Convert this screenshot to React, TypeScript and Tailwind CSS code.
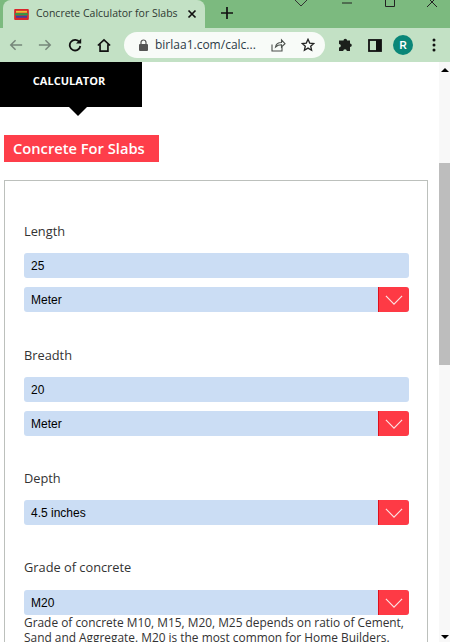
import React from "react";

const OPEN = "font-['Open_Sans',sans-serif]";
const ARIAL = "font-['Liberation_Sans',Arial,sans-serif]";

function Favicon() {
  return (
    <svg width="15" height="11" viewBox="0 0 16 12" className="shrink-0">
      <rect width="16" height="12" rx="1" fill="#d8262c" />
      <rect x="2" y="2" width="12" height="2" fill="#e8c33a" />
      <rect x="1" y="4.5" width="14" height="2.5" fill="#2f9a49" />
      <rect x="2" y="7.5" width="12" height="2" fill="#3b3fa8" />
    </svg>
  );
}

function BrowserChrome() {
  return (
    <div className="h-[62px] shrink-0 flex flex-col">
      {/* tab strip */}
      <div className="h-[28px] bg-[#7cba7f] flex relative overflow-hidden">
        <div className="ml-[3px] w-[202px] h-[28px] bg-[#c3e1c5] rounded-t-lg flex items-center pl-[11px] pr-[6px]">
          <Favicon />
          <span className={`${OPEN} ml-[7px] text-[10.500px] text-[#2f3a33] w-[146px] whitespace-nowrap`}>
            Concrete Calculator for Slabs
          </span>
          <svg width="10" height="10" viewBox="0 0 10 10" className="ml-[5px] shrink-0">
            <path d="M1.5 1.5l7 7M8.5 1.5l-7 7" stroke="#111" strokeWidth="1.7" />
          </svg>
        </div>
        <svg width="12" height="12" viewBox="0 0 12 12" className="ml-[16px] mt-[7px]">
          <path d="M6 0v12M0 6h12" stroke="#111" strokeWidth="1.7" />
        </svg>
        <div className="ml-auto flex">
          <svg width="14" height="8" viewBox="0 0 14 8" className="mr-[34px] mt-[-1px]">
            <path d="M1 1l6 6 6-6" fill="none" stroke="#333" strokeWidth="1" />
          </svg>
          <svg width="10" height="8" viewBox="0 0 10 8" className="mr-[33px]">
            <path d="M0 3h10" stroke="#222" strokeWidth="1" />
          </svg>
          <svg width="10" height="8" viewBox="0 0 10 8" className="mr-[32px]">
            <path d="M.5 -3h9v9.500h-9z" fill="none" stroke="#222" strokeWidth="1" />
          </svg>
          <svg width="10" height="8" viewBox="0 0 10 8" className="mr-[13px]">
            <path d="M0 -3l10 10M10 -3L0 7" stroke="#222" strokeWidth="1" />
          </svg>
        </div>
      </div>
      {/* toolbar */}
      <div className="h-[34px] bg-[#c3e1c5] flex items-center relative">
        <svg width="14" height="14" viewBox="0 0 16 14" className="ml-[9px]">
          <path d="M15 7H2M7.500 1.500L2 7l5.500 5.500" fill="none" stroke="#76867a" strokeWidth="1.700" />
        </svg>
        <svg width="14" height="14" viewBox="0 0 16 14" className="ml-[15px]">
          <path d="M1 7h13M8.500 1.500L14 7l-5.500 5.500" fill="none" stroke="#76867a" strokeWidth="1.700" />
        </svg>
        <svg width="14" height="14" viewBox="0 0 14 14" className="ml-[16px]">
          <path d="M11.500 4.300A5.300 5.300 0 1 0 12.300 8" fill="none" stroke="#111" strokeWidth="1.800" />
          <path d="M8 5.500h5.200V.500z" fill="#111" />
        </svg>
        <svg width="14" height="15" viewBox="0 0 16 15" className="ml-[15px]">
          <path d="M1 7.500L8 1l7 6.500M3.500 6v8h9V6" fill="none" stroke="#111" strokeWidth="1.900" />
        </svg>
        <div className="ml-[13px] w-[201px] h-[26px] rounded-full bg-[#f8fbf8] flex items-center pl-[15px]">
          <svg width="9" height="12" viewBox="0 0 9 12" className="shrink-0">
            <path d="M2 5V3.500a2.500 2.500 0 0 1 5 0V5" fill="none" stroke="#555" strokeWidth="1.200" />
            <rect y="5" width="9" height="7" rx="1" fill="#555" />
          </svg>
          <span className={`${OPEN} ml-[7px] w-[105px] text-[12px] text-[#2c3a46] whitespace-nowrap`}>birlaa1.com/calc...</span>
          <svg width="15" height="14" viewBox="0 0 15 14" className="ml-[11px] shrink-0">
            <path d="M1 6.500V13h10V9M4.500 9c.5-3 3-4.500 6-4.500V2l3.500 3.700L10.500 9V6.700c-2.500 0-4.500.8-6 2.300z" fill="none" stroke="#4a4f4b" strokeWidth="1.100" />
          </svg>
          <svg width="14" height="14" viewBox="0 0 14 14" className="ml-[15px] shrink-0">
            <path d="M7 1.300l1.700 3.800 4.100.4-3.100 2.700.9 4-3.600-2.100-3.600 2.100.9-4L1.200 5.500l4.100-.4z" fill="none" stroke="#222" strokeWidth="1.300" />
          </svg>
        </div>
        <svg width="15" height="15" viewBox="0 0 15 15" className="ml-[13px]">
          <path d="M5.500 2.500a1.800 1.800 0 0 1 3.600 0H12v3a1.800 1.800 0 0 1 0 3.600V13H8.800a1.800 1.800 0 0 0-3.600 0H1V9.500a1.800 1.800 0 0 0 0-3.600V2.500z" fill="#1c1f1c" />
        </svg>
        <svg width="14" height="13" viewBox="0 0 14 13" className="ml-[15px]">
          <rect x="1" y="1" width="12" height="11" fill="none" stroke="#111" strokeWidth="1.800" />
          <rect x="8" y="1" width="5" height="11" fill="#111" />
        </svg>
        <div className={`${ARIAL} ml-[11px] w-[20px] h-[20px] rounded-full bg-[#0a8678] text-white text-[10px] font-bold flex items-center justify-center`}>
          R
        </div>
        <svg width="4" height="14" viewBox="0 0 4 14" className="ml-[19px]">
          <circle cx="2" cy="2" r="1.500" fill="#111" />
          <circle cx="2" cy="7" r="1.500" fill="#111" />
          <circle cx="2" cy="12" r="1.500" fill="#111" />
        </svg>
      </div>
    </div>
  );
}

function TextInput({ value }: { value: string }) {
  return (
    <div className={`${ARIAL} h-[25px] rounded-[3px] bg-[#cbddf4] pl-[7px] flex items-center text-[12px] text-black`}>
      {value}
    </div>
  );
}

function SelectBox({ value }: { value: string }) {
  return (
    <div className={`${ARIAL} h-[25px] rounded-[3px] bg-[#cbddf4] pl-[7px] flex items-center justify-between overflow-hidden text-[12px] text-black`}>
      {value}
      <div className="w-[31px] h-full bg-[#fe3a45] border-l border-[#e0101c] flex items-center justify-center">
        <svg width="18" height="10" viewBox="0 0 20 11">
          <path d="M1 1l9 9 9-9" fill="none" stroke="#fbe3e3" strokeWidth="1.300" />
        </svg>
      </div>
    </div>
  );
}

function FieldLabel({ text }: { text: string }) {
  return <div className={`${OPEN} text-[12.8px] leading-[18px] text-[#333]`}>{text}</div>;
}

export default function App() {
  return (
    <div className="w-[450px] h-[642px] overflow-hidden flex flex-col bg-white">
      <BrowserChrome />
      <div className="flex-1 flex min-h-0">
        <main className="flex-1 min-w-0 overflow-hidden">
          <div className="relative w-[142px] h-[45px] bg-black flex justify-center pt-[11px] pr-[4px]">
            <span className={`${OPEN} text-[11px] leading-[15px] font-bold text-white`}>CALCULATOR</span>
            <div className="absolute left-[69px] top-[45px] w-0 h-0 border-x-[9px] border-x-transparent border-t-[9px] border-t-black" />
          </div>
          <div className={`${OPEN} mt-[28px] ml-[4px] w-[155px] h-[27px] bg-[#fe3e4a] pl-[9px] flex items-center text-[14.700px] font-semibold text-white`}>
            Concrete For Slabs
          </div>
          <div className="mt-[18px] ml-[4px] w-[424px] h-[462px] border border-[#bcc0bc] border-b-0 pt-[41px] pl-[19px] pr-[18px]">
            <FieldLabel text="Length" />
            <div className="mt-[13px]"><TextInput value="25" /></div>
            <div className="mt-[9px]"><SelectBox value="Meter" /></div>

            <div className="mt-[34px]"><FieldLabel text="Breadth" /></div>
            <div className="mt-[13px]"><TextInput value="20" /></div>
            <div className="mt-[9px]"><SelectBox value="Meter" /></div>

            <div className="mt-[33px]"><FieldLabel text="Depth" /></div>
            <div className="mt-[13px]"><SelectBox value="4.5 inches" /></div>

            <div className="mt-[33px]"><FieldLabel text="Grade of concrete" /></div>
            <div className="mt-[14px]"><SelectBox value="M20" /></div>
            <p className={`${OPEN} text-[11.900px] leading-[15px] text-[#333] whitespace-nowrap`}>
              Grade of concrete M10, M15, M20, M25 depends on ratio of Cement,
              <br />
              Sand and Aggregate. M20 is the most common for Home Builders.
            </p>
          </div>
        </main>
        {/* scrollbar */}
        <div className="w-[11px] shrink-0 bg-[#f8f8f8] flex flex-col">
          <div className="h-[101px] flex justify-center pt-[6px]">
            <div className="w-0 h-0 border-x-[4px] border-x-transparent border-b-[4px] border-b-black" />
          </div>
          <div className="h-[202px] bg-[#bdbdbd]" />
          <div className="flex-1 flex justify-center items-end pb-[3px]">
            <div className="w-0 h-0 border-x-[4px] border-x-transparent border-t-[4px] border-t-black" />
          </div>
        </div>
      </div>
    </div>
  );
}
